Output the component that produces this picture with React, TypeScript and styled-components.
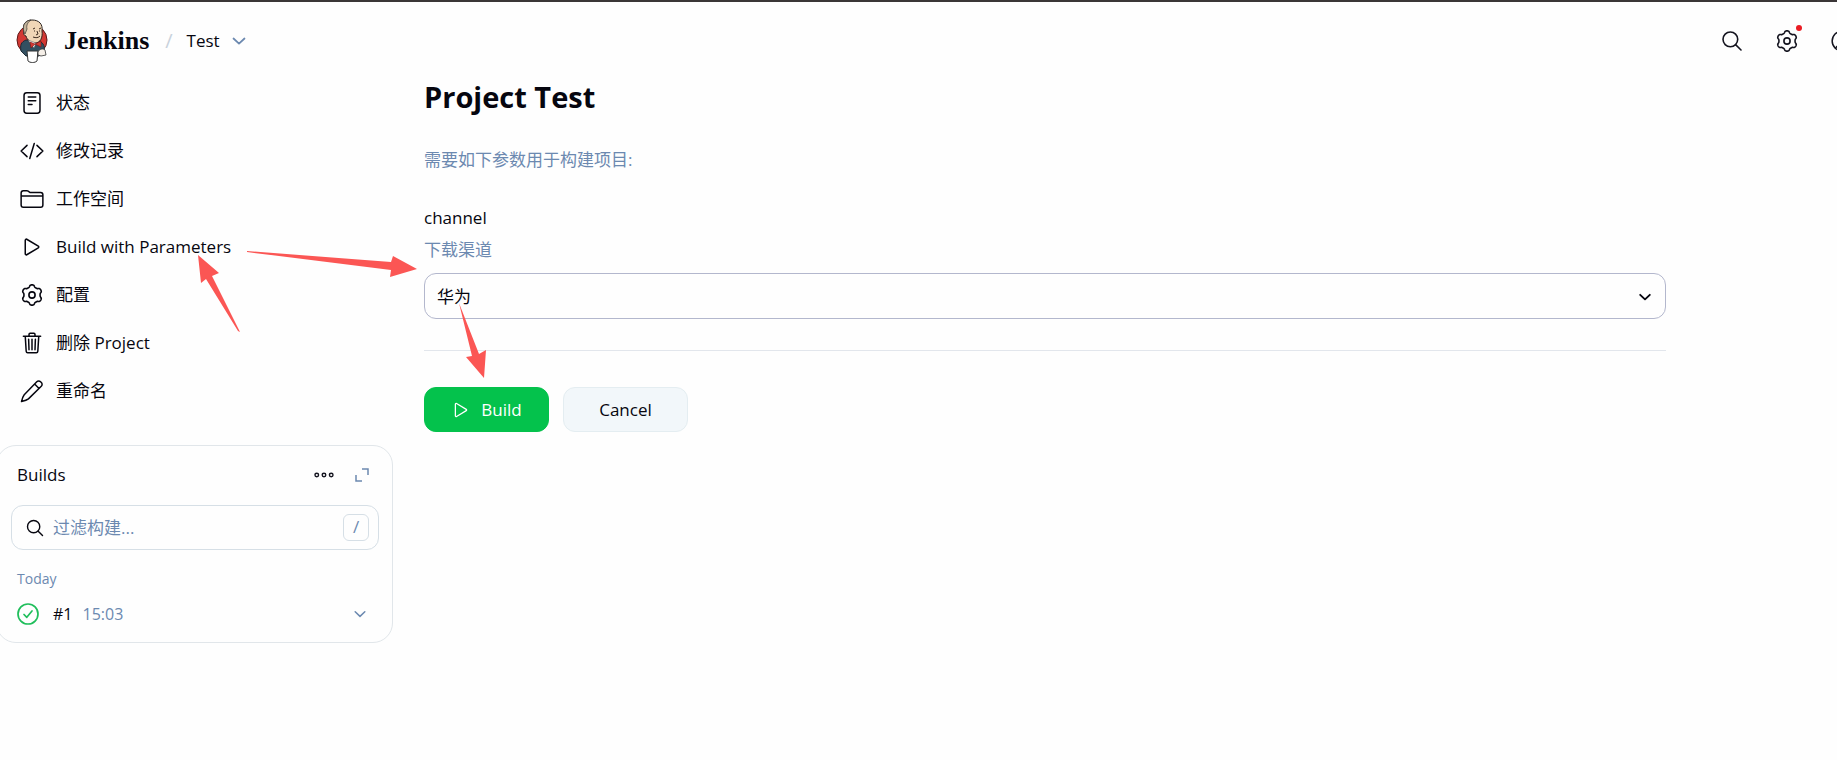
import React from 'react';
import styled, { createGlobalStyle } from 'styled-components';

const ink = '#14141f';
const muted = '#6c89b0';
const line = '#e1e6ea';

const GlobalStyle = createGlobalStyle`
  *, *::before, *::after { box-sizing: border-box; }
  body {
    margin: 0;
    overflow-x: hidden;
    background: #fefefe;
    color: #06060f;
    font-family: "Open Sans", "Noto Sans CJK SC", sans-serif;
    font-size: 17px;
    line-height: 24px;
  }
  button, input, select { font: inherit; color: inherit; }
`;

const Page = styled.div`
  position: relative;
  min-height: 100vh;
  overflow: hidden;
  border-top: 2px solid #3a3637;
`;

const Header = styled.header`
  display: flex;
  align-items: center;
  justify-content: space-between;
  height: 77px;
  padding-left: 14px;
`;

const Crumbs = styled.nav`
  display: flex;
  align-items: center;
`;

const Brand = styled.a`
  display: flex;
  align-items: center;
  gap: 14px;
  color: inherit;
  text-decoration: none;
  font-family: "Liberation Serif", serif;
  font-size: 26px;
  font-weight: 700;
`;

const Slash = styled.span`
  margin: 0 14px 0 16px;
  color: #c9d2dc;
  font-size: 20px;
`;

const CrumbLink = styled.a`
  color: inherit;
  text-decoration: none;
`;

const IconButton = styled.button<{ $w?: number; $muted?: boolean }>`
  position: relative;
  display: inline-flex;
  align-items: center;
  justify-content: center;
  width: ${p => p.$w ?? 38}px;
  height: 32px;
  padding: 0;
  border: 0;
  background: transparent;
  color: ${p => (p.$muted ? muted : ink)};
`;

const Actions = styled.div`
  display: flex;
  margin-right: -32px;
`;

const Dot = styled.span`
  position: absolute;
  top: 0;
  right: 12px;
  width: 6px;
  height: 6px;
  border-radius: 50%;
  background: #ea1c24;
`;

const Body = styled.div`
  display: grid;
  grid-template-columns: 393px minmax(0, 1fr);
  column-gap: 31px;
  align-items: start;
`;

const Menu = styled.ul`
  margin: 0;
  padding: 0 0 30px;
  list-style: none;
`;

const MenuLink = styled.a`
  display: flex;
  align-items: center;
  gap: 12px;
  height: 48px;
  padding-left: 20px;
  color: inherit;
  text-decoration: none;
`;

const Card = styled.section`
  margin-left: -4px;
  padding: 12px 13px 8px 14px;
  border: 1px solid ${line};
  border-radius: 20px;
`;

const CardHead = styled.div`
  display: flex;
  align-items: center;
  height: 34px;
  margin: 0 -2px 13px 0;
  padding-left: 6px;
`;

const CardTitle = styled.h2`
  flex: 1;
  margin: 0;
  font-size: 17px;
  font-weight: 400;
`;

const Filter = styled.label`
  display: flex;
  align-items: center;
  gap: 8px;
  height: 45px;
  padding: 0 9px 0 13px;
  border: 1px solid #d6dfe6;
  border-radius: 12px;
`;

const FilterInput = styled.input`
  flex: 1;
  min-width: 0;
  padding: 0;
  border: 0;
  outline: 0;
  background: transparent;
  &::placeholder { color: ${muted}; opacity: 1; }
`;

const Kbd = styled.kbd`
  width: 26px;
  height: 27px;
  border: 1px solid #d6dfe6;
  border-radius: 6px;
  color: ${muted};
  font-family: inherit;
  text-align: center;
`;

const Day = styled.h3`
  margin: 17px 0 0;
  padding-left: 6px;
  color: ${muted};
  font-size: 14px;
  font-weight: 400;
`;

const BuildRow = styled.div`
  display: flex;
  align-items: center;
  height: 40px;
  margin-top: 3px;
  padding-left: 6px;
`;

const BuildLink = styled.a`
  flex: 1;
  display: flex;
  align-items: center;
  gap: 14px;
  color: inherit;
  text-decoration: none;
`;

const BuildLabel = styled.span`
  display: flex;
  gap: 10px;
  font-size: 16px;
`;

const Time = styled.time`
  color: ${muted};
`;

const Main = styled.main`
  padding-right: 171px;
`;

const Title = styled.h1`
  margin: 0;
  font-size: 29px;
  line-height: 36px;
  font-weight: 700;
`;

const Note = styled.p`
  margin: 0;
  color: ${muted};
`;

const Form = styled.form`
  margin-top: 33px;
`;

const Field = styled.div`
  margin-top: 34px;
  padding-bottom: 31px;
  border-bottom: 1px solid #e2e6ec;
`;

const Label = styled.label`
  display: block;
  margin-bottom: 8px;
`;

const SelectWrap = styled.div`
  position: relative;
  margin-top: 11px;
`;

const Select = styled.select`
  display: block;
  width: 100%;
  height: 46px;
  padding: 2px 40px 0 12px;
  border: 1px solid #b3b7cd;
  border-radius: 12px;
  background: transparent;
  appearance: none;
`;

const SelectArrow = styled.span`
  position: absolute;
  top: 2px;
  bottom: 0;
  right: 14px;
  display: flex;
  align-items: center;
  pointer-events: none;
`;

const Buttons = styled.div`
  display: flex;
  gap: 14px;
  margin-top: 36px;
`;

const Button = styled.button<{ $primary?: boolean }>`
  display: inline-flex;
  align-items: center;
  justify-content: center;
  gap: 10px;
  min-width: 125px;
  height: 45px;
  border: 1px solid ${p => (p.$primary ? '#04c24c' : '#e4edf1')};
  border-radius: 12px;
  background: ${p => (p.$primary ? '#04c24c' : '#f2f7fa')};
  color: ${p => (p.$primary ? '#fff' : 'inherit')};
`;

const Arrows = styled.svg`
  position: absolute;
  top: -2px;
  left: 0;
  pointer-events: none;
`;

const Icon = ({ size = 24, sw = 32, children }: { size?: number; sw?: number; children: React.ReactNode }) => (
  <svg width={size} height={size} viewBox="0 0 512 512" fill="none" stroke="currentColor" strokeWidth={sw}
    strokeLinecap="round" strokeLinejoin="round" aria-hidden="true">{children}</svg>
);

const Chevron = ({ size = 16, sw = 56 }: { size?: number; sw?: number }) => (
  <Icon size={size} sw={sw}><path d="M80 176l176 166 176-166" /></Icon>
);
const PlayIcon = ({ size = 24 }: { size?: number }) => (
  <Icon size={size}><path d="M112 111v290c0 17.4 17 28.5 31 20.200l247.600-148.400c13-8 13-25.800 0-33.600L143 90.800c-14-8.300-31 2.800-31 20.200z" /></Icon>
);
const SearchIcon = ({ size = 24, sw = 34 }: { size?: number; sw?: number }) => (
  <Icon size={size} sw={sw}><circle cx="221" cy="221" r="157" /><path d="M338 338l110 110" /></Icon>
);

// Six rounded lobes, one of them pointing straight up.
const gearPath = 'M' + Array.from({ length: 120 }, (_, i) => {
  const a = (i / 120) * Math.PI * 2;
  const wave = Math.cos(6 * a);
  const r = 194 + 23 * Math.tanh(1.8 * wave);
  return `${(256 + r * Math.sin(a)).toFixed(1)} ${(256 - r * Math.cos(a)).toFixed(1)}`;
}).join('L') + 'Z';
const GearIcon = () => (
  <Icon sw={34}><path d={gearPath} /><circle cx="256" cy="256" r="66" /></Icon>
);

const menu: { label: string; icon: React.ReactNode }[] = [
  { label: '状态', icon: <Icon><rect x="86" y="38" width="340" height="436" rx="58" /><path d="M176 128h160M176 208h160M176 288h80" /></Icon> },
  { label: '修改记录', icon: <Icon><path d="M150 376L24 256l126-120M362 376l126-120-126-120M304 96l-96 320" /></Icon> },
  { label: '工作空间', icon: <Icon><path d="M440 432H72a48 48 0 0 1-48-48V128a48 48 0 0 1 48-48h75a48 48 0 0 1 27 8l28 19a48 48 0 0 0 27 8h211a48 48 0 0 1 48 48v221a48 48 0 0 1-48 48zM24 192h464" /></Icon> },
  { label: 'Build with Parameters', icon: <PlayIcon /> },
  { label: '配置', icon: <GearIcon /> },
  { label: '删除 Project', icon: <Icon><path d="M112 112l20 320c1 18 14 32 32 32h184c18 0 31-14 32-32l20-320M72 112h368M192 112V72a24 24 0 0 1 24-24h80a24 24 0 0 1 24 24v40M256 176v224M184 176l8 224M328 176l-8 224" /></Icon> },
  { label: '重命名', icon: <Icon><path d="M358 60a56 56 0 0 1 80-1l17 17a56 56 0 0 1-1 80L180 424c-36 30-90 44-148 58 14-58 28-112 58-148zM312 108l94 94" /></Icon> },
];

const Logo = () => (
  <svg width="36" height="46" viewBox="0 0 36 46" aria-hidden="true">
    <circle cx="18" cy="22" r="15" fill="#d33833" stroke="#5c1717" />
    <path d="M7 33c-1-6 0-9 5-11l13 1c5 2 6 6 5 11l-5 4H12z" fill="#335061" stroke="#1d2b36" />
    <path d="M10 13C8 6 12 2 18 2c7 0 11 4 10 11 1 7-2 12-7 12-4 0-8-3-9-7-2 0-3-3-2-5z" fill="#f0d6b7" stroke="#2b2420" />
    <path d="M10 14C8 7 11 3 17 2c-3 2-5 5-4 9l-2 5z" fill="#c3b59d" stroke="#3b3632" strokeWidth=".7" />
    <path d="M19 11l2-1M25 11l2-1M20 13h1M25 13h1M23 13l1 3-2 1M19 19c3 1 5 1 7-1" fill="none" stroke="#3b2a20" />
    <path d="M14 22l6 8 2-5z" fill="#fff" stroke="#555" strokeWidth=".5" />
    <path d="M16 24l5 2-4 4zM21 26l6-3v6z" fill="#d33833" stroke="#7d1414" strokeWidth=".6" />
    <path d="M13 33h11l-1 10c-2 2-7 2-9 0z" fill="#fff" stroke="#333" />
    <path d="M24 34c1-3 5-4 7-2l1 5-5 1-3-1z" fill="#f5efe8" stroke="#333" strokeWidth=".8" />
  </svg>
);

export default function App() {
  return (
    <Page>
      <GlobalStyle />
      <Header>
        <Crumbs aria-label="Breadcrumb">
          <Brand href="#"><Logo />Jenkins</Brand>
          <Slash>/</Slash>
          <CrumbLink href="#">Test</CrumbLink>
          <IconButton $muted aria-label="Test menu"><Chevron /></IconButton>
        </Crumbs>
        <Actions>
          <IconButton $w={55} aria-label="Search"><SearchIcon /></IconButton>
          <IconButton $w={55} aria-label="Manage"><GearIcon /><Dot /></IconButton>
          <IconButton $w={55} aria-label="Account">
            <Icon><circle cx="256" cy="256" r="210" /><circle cx="256" cy="200" r="74" /><path d="M120 410c50-90 222-90 272 0" /></Icon>
          </IconButton>
        </Actions>
      </Header>
      <Body>
        <aside>
          <Menu>
            {menu.map(m => (
              <li key={m.label}>
                <MenuLink href="#">{m.icon}<span>{m.label}</span></MenuLink>
              </li>
            ))}
          </Menu>
          <Card>
            <CardHead>
              <CardTitle>Builds</CardTitle>
              <IconButton aria-label="More">
                <Icon size={22} sw={32}><circle cx="88" cy="256" r="42" /><circle cx="256" cy="256" r="42" /><circle cx="424" cy="256" r="42" /></Icon>
              </IconButton>
              <IconButton $muted aria-label="Expand">
                <svg width="14" height="14" viewBox="0 0 14 14" fill="none" stroke="currentColor" strokeWidth="1.500" aria-hidden="true"><path d="M7 1h6v6M1 7v6h6" /></svg>
              </IconButton>
            </CardHead>
            <Filter>
              <SearchIcon size={20} sw={36} />
              <FilterInput type="text" placeholder="过滤构建..." aria-label="过滤构建" />
              <Kbd>/</Kbd>
            </Filter>
            <Day>Today</Day>
            <BuildRow>
              <BuildLink href="#">
                <svg width="22" height="22" viewBox="0 0 22 22" fill="none" stroke="#1fbe5b" strokeLinecap="round" strokeLinejoin="round" aria-hidden="true">
                  <circle cx="11" cy="11" r="10" strokeWidth="1.700" /><path d="M7 11.500l2.800 2.800L15 8" strokeWidth="1.700" />
                </svg>
                <BuildLabel><span>#1</span><Time>15:03</Time></BuildLabel>
              </BuildLink>
              <IconButton $muted aria-label="Build menu"><Chevron size={14} /></IconButton>
            </BuildRow>
          </Card>
        </aside>
        <Main>
          <Title>Project Test</Title>
          <Form onSubmit={e => e.preventDefault()}>
            <Note>需要如下参数用于构建项目:</Note>
            <Field>
              <Label htmlFor="channel">channel</Label>
              <Note>下载渠道</Note>
              <SelectWrap>
                <Select id="channel" defaultValue="华为"><option>华为</option></Select>
                <SelectArrow><Chevron size={14} sw={68} /></SelectArrow>
              </SelectWrap>
            </Field>
            <Buttons>
              <Button $primary type="submit"><PlayIcon size={20} />Build</Button>
              <Button type="button">Cancel</Button>
            </Buttons>
          </Form>
        </Main>
      </Body>
      <Arrows width="500" height="390" viewBox="0 0 500 390" fill="#fb5654" aria-hidden="true">
        <path d="M198 255L219 273L212 276L240 332L238 331L206 279L201 283Z" />
        <path d="M247 251L391 262L393 256L417 269L390 277L391 270L247 252Z" />
        <path d="M459 303L479 354L486 350L484 378L466 357L472 356Z" />
      </Arrows>
    </Page>
  );
}
